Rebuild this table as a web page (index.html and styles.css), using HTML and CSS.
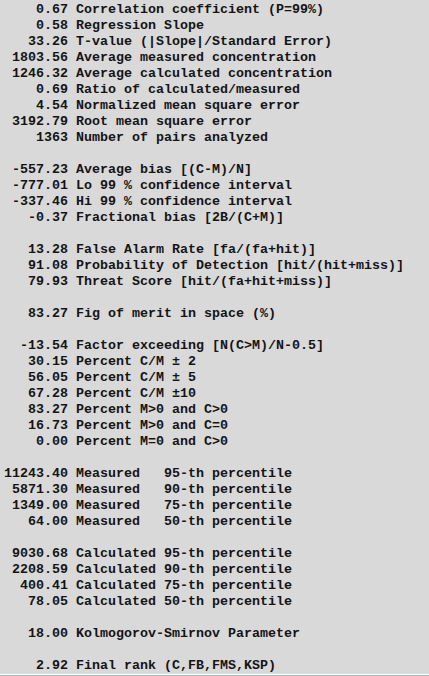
FILE: index.html
```html
<!DOCTYPE html>
<html>
<head>
<meta charset="utf-8">
<link rel="stylesheet" href="styles.css">
</head>
<body>
<div class="frame">
<div class="panel">
<pre class="report">    0.67 Correlation coefficient (P=99%)
    0.58 Regression Slope
   33.26 T-value (|Slope|/Standard Error)
 1803.56 Average measured concentration
 1246.32 Average calculated concentration
    0.69 Ratio of calculated/measured
    4.54 Normalized mean square error
 3192.79 Root mean square error
    1363 Number of pairs analyzed

 -557.23 Average bias [(C-M)/N]
 -777.01 Lo 99 % confidence interval
 -337.46 Hi 99 % confidence interval
   -0.37 Fractional bias [2B/(C+M)]

   13.28 False Alarm Rate [fa/(fa+hit)]
   91.08 Probability of Detection [hit/(hit+miss)]
   79.93 Threat Score [hit/(fa+hit+miss)]

   83.27 Fig of merit in space (%)

  -13.54 Factor exceeding [N(C>M)/N-0.5]
   30.15 Percent C/M ± 2
   56.05 Percent C/M ± 5
   67.28 Percent C/M ±10
   83.27 Percent M>0 and C>0
   16.73 Percent M>0 and C=0
    0.00 Percent M=0 and C>0

11243.40 Measured   95-th percentile
 5871.30 Measured   90-th percentile
 1349.00 Measured   75-th percentile
   64.00 Measured   50-th percentile

 9030.68 Calculated 95-th percentile
 2208.59 Calculated 90-th percentile
  400.41 Calculated 75-th percentile
   78.05 Calculated 50-th percentile

   18.00 Kolmogorov-Smirnov Parameter

    2.92 Final rank (C,FB,FMS,KSP)</pre>
</div>
</div>
</body>
</html>
```

FILE: styles.css
```css
html, body {
  margin: 0;
  padding: 0;
  background: #d9d9d9;
}
.frame {
  height: 676px;
  box-sizing: border-box;
  border-bottom: 1px solid #a3b5bd;
  overflow: hidden;
}
.panel {
  height: 675px;
  box-sizing: border-box;
  border-bottom: 1px solid #ffffff;
  background: #d9d9d9;
  padding: 2px 0 0 4px;
}
.report {
  margin: 0;
  font-family: "Liberation Mono", "Courier New", monospace;
  font-weight: bold;
  font-size: 13.333px;
  line-height: 16px;
  color: #141414;
}
```
